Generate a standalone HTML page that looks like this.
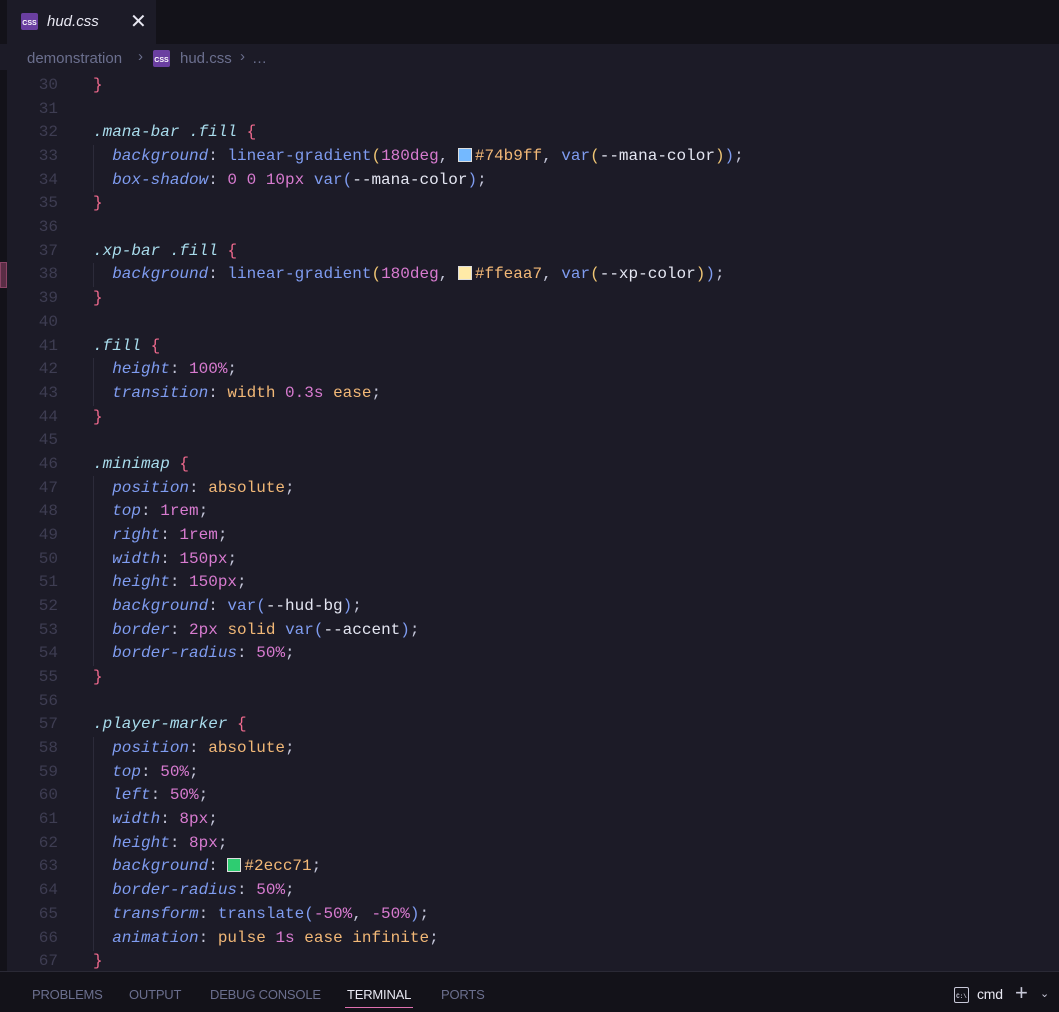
<!DOCTYPE html>
<html><head><meta charset="utf-8"><style>
*{margin:0;padding:0;box-sizing:border-box}
body{width:1059px;height:1012px;overflow:hidden;background:#1c1b27;font-family:"Liberation Sans",sans-serif;position:relative}
.tabbar{position:absolute;left:0;top:0;width:1059px;height:44px;background:#131219}
.tab{position:absolute;left:7px;top:0;width:149px;height:44px;background:#1c1b27}
.icon{position:absolute;width:17px;height:17px;background:#6a3fa0;border-radius:2px;color:#fff;font:bold 7px "Liberation Sans",sans-serif;text-align:center;line-height:22px}
.crumb{position:absolute;left:7px;top:44px;width:1052px;height:26px;background:#1c1b27;color:#6b6f8e;font-size:15px}
.strip{position:absolute;left:0;top:70px;width:7px;height:901px;background:#131219}
.ln{position:absolute;left:0;width:58px;text-align:right;color:#3e3d52;font:16px "Liberation Mono",monospace;height:24px;line-height:24px}
.cl{position:absolute;left:93px;white-space:pre;font:16px "Liberation Mono",monospace;height:24px;line-height:24px;color:#c3c5d8}
.s{color:#a9dcec;font-style:italic}.p{color:#7f9cf0;font-style:italic}.n{color:#d87bd0}.k{color:#f2b877}.f{color:#7f9cf0}.o{color:#f0c674}.v{color:#e4e6f2}.b{color:#f06a8e}.h{color:#f2b877}
.sw{display:inline-block;width:14px;height:14px;border:1px solid #ddd;vertical-align:-2px;margin-right:3px}
.guide{position:absolute;left:93px;width:1px;background:#2c2b3a}
.panel{position:absolute;left:0;top:971px;width:1059px;height:41px;background:#131219;border-top:1px solid #2a2935}
.pt{position:absolute;top:15px;font-size:13px;color:#6b6f8e;letter-spacing:-0.2px}
</style></head><body>
<div class="tabbar"></div>
<div class="tab">
<div class="icon" style="left:14px;top:13px">CSS</div>
<div style="position:absolute;left:40px;top:13px;color:#e8e8f2;font-style:italic;font-size:15px">hud.css</div>
<div style="position:absolute;left:123px;top:9px;color:#e8e8f2;font-size:20px">✕</div>
</div>
<div class="crumb">
<span style="position:absolute;left:20px;top:6px">demonstration</span>
<span style="position:absolute;left:131px;top:4px">›</span>
<div class="icon" style="left:146px;top:6px">CSS</div>
<span style="position:absolute;left:173px;top:6px">hud.css</span>
<span style="position:absolute;left:233px;top:4px">›</span>
<span style="position:absolute;left:245px;top:6px">…</span>
</div>
<div class="strip"></div>
<div style="position:absolute;left:0;top:262px;width:7px;height:26px;background:#5a2d45;border:1px solid #8a4466"></div>
<div class="guide" style="top:145px;height:47px"></div>
<div class="guide" style="top:263px;height:24px"></div>
<div class="guide" style="top:358px;height:48px"></div>
<div class="guide" style="top:476px;height:190px"></div>
<div class="guide" style="top:737px;height:214px"></div>

<div class="ln" style="top:73px">30</div><div class="cl" style="top:73px"><span class="b">}</span></div>
<div class="ln" style="top:96.7px">31</div>
<div class="ln" style="top:120.4px">32</div><div class="cl" style="top:120.4px"><span class="s">.mana-bar .fill</span> <span class="b">{</span></div>
<div class="ln" style="top:144px">33</div><div class="cl" style="top:144px">  <span class="p">background</span>: <span class="f">linear-gradient</span><span class="o">(</span><span class="n">180deg</span>, <span class="sw" style="background:#74b9ff"></span><span class="h">#74b9ff</span>, <span class="f">var</span><span class="o">(</span><span class="v">--mana-color</span><span class="o">)</span><span class="f">)</span>;</div>
<div class="ln" style="top:167.7px">34</div><div class="cl" style="top:167.7px">  <span class="p">box-shadow</span>: <span class="n">0 0 10px</span> <span class="f">var(</span><span class="v">--mana-color</span><span class="f">)</span>;</div>
<div class="ln" style="top:191.4px">35</div><div class="cl" style="top:191.4px"><span class="b">}</span></div>
<div class="ln" style="top:215px">36</div>
<div class="ln" style="top:238.8px">37</div><div class="cl" style="top:238.8px"><span class="s">.xp-bar .fill</span> <span class="b">{</span></div>
<div class="ln" style="top:262.4px">38</div><div class="cl" style="top:262.4px">  <span class="p">background</span>: <span class="f">linear-gradient</span><span class="o">(</span><span class="n">180deg</span>, <span class="sw" style="background:#ffeaa7"></span><span class="h">#ffeaa7</span>, <span class="f">var</span><span class="o">(</span><span class="v">--xp-color</span><span class="o">)</span><span class="f">)</span>;</div>
<div class="ln" style="top:286px">39</div><div class="cl" style="top:286px"><span class="b">}</span></div>
<div class="ln" style="top:309.8px">40</div>
<div class="ln" style="top:333.5px">41</div><div class="cl" style="top:333.5px"><span class="s">.fill</span> <span class="b">{</span></div>
<div class="ln" style="top:357.2px">42</div><div class="cl" style="top:357.2px">  <span class="p">height</span>: <span class="n">100%</span>;</div>
<div class="ln" style="top:380.8px">43</div><div class="cl" style="top:380.8px">  <span class="p">transition</span>: <span class="k">width</span> <span class="n">0.3s</span> <span class="k">ease</span>;</div>
<div class="ln" style="top:404.5px">44</div><div class="cl" style="top:404.5px"><span class="b">}</span></div>
<div class="ln" style="top:428.2px">45</div>
<div class="ln" style="top:451.9px">46</div><div class="cl" style="top:451.9px"><span class="s">.minimap</span> <span class="b">{</span></div>
<div class="ln" style="top:475.6px">47</div><div class="cl" style="top:475.6px">  <span class="p">position</span>: <span class="k">absolute</span>;</div>
<div class="ln" style="top:499.2px">48</div><div class="cl" style="top:499.2px">  <span class="p">top</span>: <span class="n">1rem</span>;</div>
<div class="ln" style="top:522.9px">49</div><div class="cl" style="top:522.9px">  <span class="p">right</span>: <span class="n">1rem</span>;</div>
<div class="ln" style="top:546.6px">50</div><div class="cl" style="top:546.6px">  <span class="p">width</span>: <span class="n">150px</span>;</div>
<div class="ln" style="top:570.3px">51</div><div class="cl" style="top:570.3px">  <span class="p">height</span>: <span class="n">150px</span>;</div>
<div class="ln" style="top:594px">52</div><div class="cl" style="top:594px">  <span class="p">background</span>: <span class="f">var(</span><span class="v">--hud-bg</span><span class="f">)</span>;</div>
<div class="ln" style="top:617.6px">53</div><div class="cl" style="top:617.6px">  <span class="p">border</span>: <span class="n">2px</span> <span class="k">solid</span> <span class="f">var(</span><span class="v">--accent</span><span class="f">)</span>;</div>
<div class="ln" style="top:641.3px">54</div><div class="cl" style="top:641.3px">  <span class="p">border-radius</span>: <span class="n">50%</span>;</div>
<div class="ln" style="top:665px">55</div><div class="cl" style="top:665px"><span class="b">}</span></div>
<div class="ln" style="top:688.7px">56</div>
<div class="ln" style="top:712.4px">57</div><div class="cl" style="top:712.4px"><span class="s">.player-marker</span> <span class="b">{</span></div>
<div class="ln" style="top:736px">58</div><div class="cl" style="top:736px">  <span class="p">position</span>: <span class="k">absolute</span>;</div>
<div class="ln" style="top:759.7px">59</div><div class="cl" style="top:759.7px">  <span class="p">top</span>: <span class="n">50%</span>;</div>
<div class="ln" style="top:783.4px">60</div><div class="cl" style="top:783.4px">  <span class="p">left</span>: <span class="n">50%</span>;</div>
<div class="ln" style="top:807.1px">61</div><div class="cl" style="top:807.1px">  <span class="p">width</span>: <span class="n">8px</span>;</div>
<div class="ln" style="top:830.8px">62</div><div class="cl" style="top:830.8px">  <span class="p">height</span>: <span class="n">8px</span>;</div>
<div class="ln" style="top:854.4px">63</div><div class="cl" style="top:854.4px">  <span class="p">background</span>: <span class="sw" style="background:#2ecc71"></span><span class="h">#2ecc71</span>;</div>
<div class="ln" style="top:878.1px">64</div><div class="cl" style="top:878.1px">  <span class="p">border-radius</span>: <span class="n">50%</span>;</div>
<div class="ln" style="top:901.8px">65</div><div class="cl" style="top:901.8px">  <span class="p">transform</span>: <span class="f">translate(</span><span class="n">-50%</span>, <span class="n">-50%</span><span class="f">)</span>;</div>
<div class="ln" style="top:925.5px">66</div><div class="cl" style="top:925.5px">  <span class="p">animation</span>: <span class="k">pulse</span> <span class="n">1s</span> <span class="k">ease infinite</span>;</div>
<div class="ln" style="top:949.2px">67</div><div class="cl" style="top:949.2px"><span class="b">}</span></div>

<div class="panel">
<span class="pt" style="left:32px">PROBLEMS</span>
<span class="pt" style="left:129px">OUTPUT</span>
<span class="pt" style="left:210px">DEBUG CONSOLE</span>
<span class="pt" style="left:347px;color:#e8e8f2">TERMINAL</span>
<div style="position:absolute;left:345px;top:35px;width:68px;height:1px;background:#e070b0"></div>
<span class="pt" style="left:441px">PORTS</span>
<div style="position:absolute;left:954px;top:15px;width:15px;height:16px;border:1px solid #c8c8d8;border-radius:2px;font:bold 6px 'Liberation Mono',monospace;color:#c8c8d8;text-align:center;line-height:14px;padding-top:2px">C:\</div>
<span class="pt" style="left:977px;color:#e8e8f2;font-size:14px;top:14px">cmd</span>
<span style="position:absolute;left:1015px;top:8px;color:#c8c8d8;font-size:22px;font-weight:300">+</span>
<span style="position:absolute;left:1040px;top:15px;color:#c8c8d8;font-size:11px">⌄</span>
</div>
</body></html>
